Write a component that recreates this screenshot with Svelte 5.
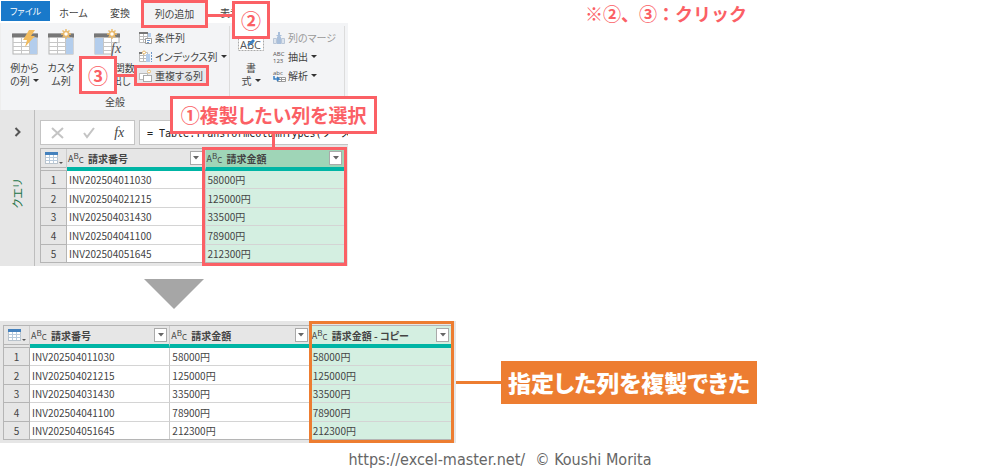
<script lang="ts">
  type Column = { title: string; key: "no" | "amount"; state?: "selected" | "copied" };

  const rows = [
    { no: "INV202504011030", amount: "58000円" },
    { no: "INV202504021215", amount: "125000円" },
    { no: "INV202504031430", amount: "33500円" },
    { no: "INV202504041100", amount: "78900円" },
    { no: "INV202504051645", amount: "212300円" },
  ];

  const before: Column[] = [
    { title: "請求番号", key: "no" },
    { title: "請求金額", key: "amount", state: "selected" },
  ];

  const after: Column[] = [
    { title: "請求番号", key: "no" },
    { title: "請求金額", key: "amount" },
    { title: "請求金額 - コピー", key: "amount", state: "copied" },
  ];

  let formula = $state("= Table.TransformColumnTypes(ソース,");
</script>

{#snippet sheet()}
  <rect x="1" y="3" width="24" height="20" fill="#fff" stroke="#b4b4b4" />
  <path d="M1 11.5h24M1 15.5h24M1 19.5h24M9.5 7v16M17.5 7v16" stroke="#c6c6c6" />
  <path d="M0 2.5h26v4H0z" fill="#777" />
{/snippet}

{#snippet spark()}
  <circle cx="18" cy="3" r="2.5" fill="#fff" stroke="#e9b96a" stroke-width="1.5" />
  <path
    d="M18-2v2M18 6v2M13 3h2M21 3h2M14.500-.5l1.300 1.300M20.200 5.200l1.300 1.300M21.500-.5l-1.300 1.300M15.800 5.200l-1.300 1.300"
    stroke="#e9b96a"
    stroke-width="1.4"
  />
{/snippet}

{#snippet grid(columns: Column[], caption: string)}
  <table aria-label={caption}>
    <thead>
      <tr>
        <th class="corner">
          <svg width="18" height="13" viewBox="0 0 18 13" aria-hidden="true">
            <rect x="0.5" y="0.5" width="12" height="11" fill="#fff" stroke="#b9c3cc" />
            <path d="M1 5.500h12M1 8.500h12M4.500 2v9M8.500 2v9" stroke="#b9cbdc" />
            <path d="M0 0h13v3H0z" fill="#4481bd" />
            <path d="M14 10h4l-2 2z" fill="#555" />
          </svg>
        </th>
        {#each columns as col}
          <th class={col.state}>
            <div class="head">
              <span class="type">A<sup>B</sup><sub>C</sub></span>
              <span class="title">{col.title}</span>
              <button class="filter" aria-label="{col.title} フィルター">
                <svg width="6" height="4" viewBox="0 0 6 4"><path d="M0 0h6L3 3.500z" fill="#666" /></svg>
              </button>
            </div>
          </th>
        {/each}
      </tr>
    </thead>
    <tbody>
      {#each rows as row, i}
        <tr>
          <th scope="row">{i + 1}</th>
          {#each columns as col}
            <td class={col.state}>{row[col.key]}</td>
          {/each}
        </tr>
      {/each}
    </tbody>
  </table>
{/snippet}

<main>
  <div class="top">
    <section class="editor">
      <nav class="tabs">
        <button class="file">ファイル</button>
        <button class="home">ホーム</button>
        <button>変換</button>
        <div class="marked add-column">
          <button>列の追加</button>
          <div class="frame"></div>
          <span class="step two">②</span>
        </div>
        <button class="view">表示</button>
      </nav>

      <div class="ribbon">
        <div class="group general">
          <div class="tools">
            <button class="big from-example">
              <svg width="26" height="24" viewBox="0 0 26 24">
                {@render sheet()}
                <path d="M18 7h7v16h-7z" fill="#b3cdec" />
                <path d="M17-1h6l-4 6h4L13 16l2-7h-4z" fill="#f2bc5e" />
              </svg>
              <span>例から<br />の列 <i class="caret"></i></span>
            </button>
            <button class="big custom">
              <svg width="26" height="24" viewBox="0 0 26 24">
                {@render sheet()}
                <path d="M18 7h7v16h-7z" fill="#b3cdec" />
                {@render spark()}
              </svg>
              <span>カスタ<br />ム列</span>
            </button>
            <button class="big invoke">
              <svg width="26" height="24" viewBox="0 0 26 24">
                {@render sheet()}
                <path d="M1 7h8v16H1z" fill="#b3cdec" />
                <path d="M18 12h9v12h-9z" fill="#f3f4f6" />
                {@render spark()}
                <text x="17" y="22" class="fx">fx</text>
              </svg>
              <span>カスタム関数<br />の呼び出し</span>
            </button>
            <div class="list">
              <button>
                <svg width="14" height="14" viewBox="0 0 14 14">
                  <path d="M.5 2.500h8v9h-8zM.5 5.500h8M.5 8.500h8M4.500 2.500v9" fill="#fff" stroke="#bbb" />
                  <path d="M0 1h9v2H0z" fill="#777" />
                  <path d="M9 2h3v4H9z" fill="#b3cdec" />
                  <path d="M6.500 7.500h6v5h-6z" fill="#fff" stroke="#999" />
                  <path d="M8 9.500h3M8 11.500h2" stroke="#6d97c8" />
                </svg>
                条件列
              </button>
              <button>
                <svg width="14" height="14" viewBox="0 0 14 14">
                  <path d="M.5 2.500h8v9h-8zM.5 5.500h8M.5 8.500h8M4.500 2.500v9" fill="#fff" stroke="#bbb" />
                  <path d="M0 2h3v2H0z" fill="#777" />
                  <path d="M7 4h4v8H7z" fill="#b3cdec" />
                  <path d="M12.500 2v10" stroke="#6d97c8" stroke-dasharray="2 1" />
                  <circle cx="5" cy="2.500" r="1.500" fill="#fff" stroke="#e9b96a" />
                </svg>
                インデックス列 <i class="caret"></i>
              </button>
              <div class="marked duplicate">
                <button>
                  <svg width="14" height="14" viewBox="0 0 14 14">
                    <rect x="0.5" y="4.500" width="8" height="6" fill="#fff" stroke="#bbb" />
                    <rect x="4.500" y="6.500" width="8" height="6" fill="#fff" stroke="#aaa" />
                    <circle cx="10" cy="2.500" r="1.500" fill="#fff" stroke="#e9b96a" />
                  </svg>
                  重複する列
                </button>
                <div class="frame"></div>
                <span class="step three">③</span>
              </div>
            </div>
          </div>
          <div class="group-name">全般</div>
        </div>

        <div class="group text-tools">
          <button class="big format">
            <svg width="26" height="24" viewBox="0 0 26 24">
              <path d="M.5 7.500v12h25v-12" fill="#fff" stroke="#aaa" stroke-dasharray="2 1" />
              <text x="2" y="18" class="abc">ABC</text>
              <path d="M9 14l6-6 2 2-6 5z" fill="#3a80c3" />
            </svg>
            <span>書<br />式 <i class="caret"></i></span>
          </button>
          <div class="list">
            <button disabled>
              <svg width="13" height="14" viewBox="0 0 13 14">
                <path d="M.5 7.500h3v5h-3zM8.500 7.500h3v5h-3z" fill="#dce4ee" stroke="#bac7d8" />
                <path d="M4 6h4v7H4zM5 1h2v3h2L6 7 3 4h2z" fill="#a9bfdb" />
              </svg>
              列のマージ
            </button>
            <button>
              <svg width="13" height="14" viewBox="0 0 13 14">
                <text x="0" y="6" class="tiny">ABC</text>
                <text x="0" y="13" class="tiny">123</text>
              </svg>
              抽出 <i class="caret"></i>
            </button>
            <button>
              <svg width="13" height="14" viewBox="0 0 13 14">
                <text x="0" y="6" class="tiny">abc</text>
                <path d="M4.500 8.500h8v4h-8zM4.500 10.500h8M8.500 8v5" fill="#fff" stroke="#999" />
                <path d="M1 7v3h4M4 8l2 2-2 2" fill="none" stroke="#3a80c3" stroke-width="1.500" />
              </svg>
              解析 <i class="caret"></i>
            </button>
          </div>
        </div>
      </div>

      <div class="workspace">
        <aside>
          <button aria-label="クエリを展開">
            <svg width="8" height="10" viewBox="0 0 8 10">
              <path d="M1.500 1l4 4-4 4" fill="none" stroke="#555" stroke-width="2" />
            </svg>
          </button>
          <span>クエリ</span>
        </aside>
        <div class="content">
          <div class="formula">
            <div class="actions">
              <button aria-label="キャンセル">
                <svg width="13" height="12" viewBox="0 0 13 12">
                  <path d="M1 1l11 10M12 1L1 11" stroke="#c4c4c4" stroke-width="2" />
                </svg>
              </button>
              <button aria-label="確定">
                <svg width="12" height="12" viewBox="0 0 12 12">
                  <path d="M1 6l3 4 7-9" fill="none" stroke="#c4c4c4" stroke-width="2" />
                </svg>
              </button>
              <button class="insert-fx">fx</button>
            </div>
            <input aria-label="数式" bind:value={formula} spellcheck="false" />
          </div>
          <div class="grid">
            {@render grid(before, "複製前")}
            <div class="frame column">
              <strong class="callout">①複製したい列を選択</strong>
            </div>
          </div>
        </div>
      </div>
    </section>
    <p class="note">※②、③：クリック</p>
  </div>

  <svg class="arrow" width="60" height="30" viewBox="0 0 60 30" aria-hidden="true">
    <path d="M0 0h60L30 30z" fill="#a6a6a6" />
  </svg>

  <div class="result">
    <section class="grid wide">
      {@render grid(after, "複製後")}
      <div class="frame copy"></div>
    </section>
    <div class="line"></div>
    <strong class="answer">指定した列を複製できた</strong>
  </div>

  <footer>
    <a href="https://excel-master.net/">https://excel-master.net/</a>
    <span>© Koushi Morita</span>
  </footer>
</main>

<style>
  :global(body) {
    margin: 0;
    background: #fff;
  }
  main {
    --red: #fb6065;
    --orange: #ed7d31;
    color: #444;
    font: 10px/13px "Noto Sans CJK JP", sans-serif;
    font-feature-settings: "palt";
  }
  button {
    padding: 0;
    border: 0;
    background: none;
    color: inherit;
    font: inherit;
    font-feature-settings: inherit;
    white-space: nowrap;
  }
  svg {
    display: block;
    flex: none;
    overflow: visible;
  }
  .top {
    display: grid;
    grid-template-columns: minmax(348px, 34%) 1fr;
  }

  /* tabs */
  .tabs {
    display: flex;
    height: 23px;
    padding-left: 1px;
  }
  .tabs button {
    height: 24px;
  }
  .tabs .file {
    width: 49px;
    height: 20px;
    margin: 1px 9px 0 0;
    background: #1979ca;
    color: #fff;
    font-size: 9px;
  }
  .tabs .home {
    width: 29px;
    margin-right: 22px;
  }
  .tabs .view {
    margin-left: 12px;
  }
  .marked {
    position: relative;
  }
  .add-column {
    width: 67px;
    margin-left: 11px;
  }
  .add-column button {
    width: 100%;
    height: 26px;
    background: #f3f4f6;
  }

  /* annotations */
  .frame {
    position: absolute;
    inset: 0;
    box-sizing: border-box;
    border: 3px solid var(--red);
    pointer-events: none;
  }
  .add-column .frame {
    bottom: -5px;
  }
  .step {
    position: absolute;
    z-index: 2;
    display: grid;
    place-items: center;
    box-sizing: border-box;
    width: 38px;
    height: 38px;
    border: 3px solid var(--red);
    background: #fff;
    color: var(--red);
    font-size: 20px;
    font-weight: 700;
  }
  .step::after {
    content: "";
    position: absolute;
    width: 24px;
    height: 3px;
    background: var(--red);
  }
  .two {
    top: 1px;
    left: calc(100% + 24px);
  }
  .two::after {
    top: 10px;
    right: 100%;
    width: 28px;
  }
  .three {
    top: -10px;
    right: calc(100% + 22px);
  }
  .three::after {
    top: 15px;
    left: 100%;
    width: 20px;
  }
  .note {
    margin: 0;
    padding-left: 237px;
    color: var(--red);
    font-size: 18px;
    font-weight: 700;
    font-feature-settings: normal;
    line-height: 26px;
    white-space: nowrap;
  }

  /* ribbon */
  .ribbon {
    display: flex;
    height: 87px;
    padding-left: 6px;
    border-left: 1px solid #eee;
    box-sizing: border-box;
    background: #f3f4f6;
  }
  .group {
    box-sizing: border-box;
    margin: 3px 0 6px;
    padding-top: 2px;
    border-right: 1px solid #dcdcdc;
  }
  .general {
    width: 223px;
  }
  .tools,
  .text-tools {
    display: flex;
  }
  .big {
    display: flex;
    flex-direction: column;
    align-items: center;
    gap: 6px;
    padding-top: 3px;
  }
  .from-example {
    width: 35px;
  }
  .custom {
    width: 38px;
  }
  .invoke {
    width: 53px;
  }
  .list {
    display: flex;
    flex-direction: column;
    align-items: flex-start;
    margin-left: 6px;
  }
  .list button {
    display: flex;
    align-items: center;
    gap: 2px;
    height: 19px;
  }
  .list button:disabled {
    color: #999;
  }
  .caret {
    display: inline-block;
    margin-left: 1px;
    border: 3px solid transparent;
    border-top-color: #333;
    border-bottom: 0;
    vertical-align: 3px;
  }
  .duplicate button {
    position: relative;
  }
  .duplicate::before {
    content: "";
    position: absolute;
    inset: -1px -6px -1px -5px;
    background: #e6e8eb;
  }
  .duplicate .frame {
    inset: -1px -6px -1px -5px;
  }
  .group-name {
    margin-top: 8px;
    padding-right: 6px;
    text-align: center;
  }
  .text-tools {
    padding-left: 8px;
    padding-right: 8px;
    flex: 0 0 108px;
  }
  .format {
    width: 26px;
  }
  .text-tools .list {
    margin-left: 9px;
  }
  .fx,
  .insert-fx {
    font: italic 14px "Liberation Serif", serif;
    fill: #555;
  }
  .abc {
    font: 11px "Open Sans", sans-serif;
    fill: #555;
  }
  .tiny {
    font: 6px "Open Sans", sans-serif;
    fill: #555;
  }

  /* workspace */
  .workspace {
    display: flex;
    background: #e6e6e6;
  }
  aside {
    display: flex;
    flex: 0 0 35px;
    flex-direction: column;
    align-items: center;
    box-sizing: border-box;
    padding: 17px 0 0 1px;
    border-right: 1px solid #bdbdbd;
    color: #217346;
    font-size: 11px;
  }
  aside span {
    margin-top: 42px;
    writing-mode: vertical-rl;
    text-orientation: sideways;
    transform: rotate(180deg);
  }
  .content {
    flex: 1;
    min-width: 0;
    padding: 10px 0 3px 5px;
  }
  .formula {
    display: flex;
    gap: 4px;
    height: 25px;
    margin-bottom: 3px;
  }
  .actions {
    display: flex;
    flex: 0 0 95px;
    align-items: center;
    justify-content: space-around;
    box-sizing: border-box;
    border: 1px solid #c4c4c4;
    background: #fff;
  }
  .formula input {
    flex: 1;
    min-width: 0;
    box-sizing: border-box;
    padding: 0 0 0 7px;
    border: 1px solid #c4c4c4;
    border-right: 0;
    background: #fff;
    color: #222;
    font: 10px "DejaVu Sans Mono", "Noto Sans CJK JP", monospace;
  }

  /* data grid */
  .grid {
    position: relative;
    margin-right: 3px;
  }
  table {
    width: 100%;
    height: 115px;
    border-collapse: separate;
    border-spacing: 0;
    table-layout: fixed;
    border: 1px solid #b5b5b5;
    box-sizing: border-box;
    white-space: nowrap;
  }
  th,
  td {
    padding: 0;
    border-right: 1px solid #ccc;
    text-align: left;
    font-weight: 400;
  }
  th:last-child,
  td:last-child {
    border-right: 0;
  }
  thead th {
    height: 18px;
    border-bottom: 4px solid #00b5a5;
    background: #e6e6e6;
  }
  thead .corner {
    width: 25px;
    border-bottom: 4px double #b5b5b5;
  }
  .corner svg {
    margin-left: 4px;
  }
  tbody th {
    border-right-color: #b5b5b5;
    background: #e6e6e6;
    text-align: center;
  }
  td {
    padding-left: 2px;
    background: #fff;
  }
  tbody tr:not(:last-child) > * {
    border-bottom: 1px solid #d4d4d4;
  }
  tbody tr:not(:last-child) th {
    border-bottom-color: #b5b5b5;
  }
  td.selected,
  td.copied,
  th.copied {
    background: #d4efe1;
  }
  th.selected {
    background: #9fd5b7;
  }
  .head {
    display: flex;
    align-items: center;
    padding: 0 2px 0 1px;
  }
  .type {
    width: 20px;
    font-size: 9px;
  }
  .type sup,
  .type sub {
    font-size: 8px;
    line-height: 0;
  }
  .type sup {
    vertical-align: 3px;
  }
  .type sub {
    vertical-align: -1px;
  }
  .title {
    flex: 1;
    font-size: 10px;
    font-weight: 700;
  }
  .filter {
    display: grid;
    place-items: center;
    width: 13px;
    height: 14px;
    border: 1px solid #aaa;
    background: #fff;
  }
  .frame.column {
    inset: -1px -2px -3px 53%;
  }
  .frame.column::before {
    content: "";
    position: absolute;
    bottom: 100%;
    left: 50%;
    width: 3px;
    height: 16px;
    margin-left: -2px;
    background: var(--red);
  }
  .callout {
    position: absolute;
    z-index: 3;
    bottom: calc(100% + 16px);
    left: -35px;
    box-sizing: border-box;
    height: 38px;
    padding: 0 8px;
    border: 3px solid var(--red);
    background: #fff;
    color: var(--red);
    font-size: 19px;
    line-height: 32px;
    white-space: nowrap;
  }

  /* result */
  .arrow {
    margin: 13px 0 12px 144px;
  }
  .result {
    display: flex;
    align-items: center;
  }
  .wide {
    flex: 0 1 46%;
    min-width: 440px;
    box-sizing: border-box;
    max-width: 456px;
    margin: 0;
    padding: 4px 4px 3px 3px;
    background: #e6e6e6;
  }
  .frame.copy {
    inset: 0 2px 0 309px;
    border-color: var(--orange);
  }
  .line {
    width: 47px;
    height: 3px;
    margin-left: -2px;
    background: var(--orange);
  }
  .answer {
    padding: 0 7px;
    background: var(--orange);
    color: #fff;
    font-size: 23px;
    font-weight: 900;
    line-height: 43px;
    white-space: nowrap;
  }
  footer {
    display: flex;
    justify-content: center;
    gap: 10px;
    padding-top: 7px;
    color: #666;
    font: 16px/20px "DejaVu Sans Condensed", "DejaVu Sans", sans-serif;
  }
  footer a {
    color: inherit;
    text-decoration: none;
  }
</style>
